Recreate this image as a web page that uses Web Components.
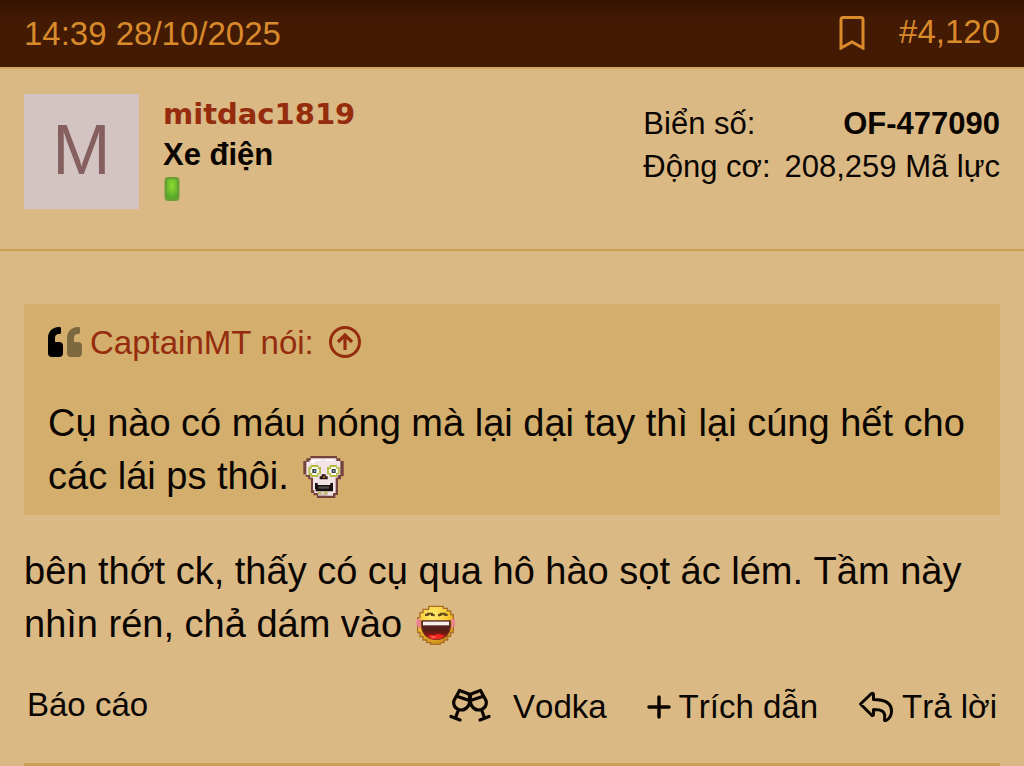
<!DOCTYPE html>
<html lang="vi">
<head>
<meta charset="utf-8">
<meta name="viewport" content="width=device-width, initial-scale=1">
<title>#4,120</title>
<style>
  :root {
    --color-page: #dab985;
    --color-line: #cb9f51;
    --color-link: #942c0d;
    --color-quote: #d3ae6c;
    --color-accent: #d98a2b;
  }
  body {
    margin: 0;
    background: var(--color-page);
    color: #0a0500;
    font-family: "Liberation Sans", Arial, sans-serif;
    font-size: 33px;
    font-kerning: none;
  }
</style>
</head>
<body>
<forum-post>
  <post-header slot="header" time="14:39 28/10/2025" number="#4,120"></post-header>
  <post-user slot="user" name="mitdac1819" rank="Xe điện">
    <user-stat label="Biển số:"><b>OF-477090</b></user-stat>
    <user-stat label="Động cơ:">208,259 Mã lực</user-stat>
  </post-user>
  <post-quote author="CaptainMT">Cụ nào có máu nóng mà lại dại tay thì lại cúng hết cho các lái ps thôi. <post-smilie kind="skull"></post-smilie></post-quote>
  <div>bên thớt ck, thấy có cụ qua hô hào sọt ác lém. Tầm này nhìn rén, chả dám vào <post-smilie kind="laugh"></post-smilie></div>
  <post-actions slot="actions"></post-actions>
</forum-post>

<script>
/**
 * Attach an open shadow root and fill it.
 * @param {HTMLElement} host
 * @param {string} html
 */
function render(host, html) {
  host.attachShadow({ mode: 'open' }).innerHTML = html;
}

/** `<forum-post>` — one post: header, user, body and actions slots. */
class ForumPost extends HTMLElement {
  constructor() {
    super();
    render(this, `
      <style>
        :host { display: block; }
        .body {
          display: flex; flex-direction: column; gap: 30px;
          padding: 53px 24px 0;
          font-size: 38px; line-height: 53px;
        }
        footer { padding: 0 24px; }
        footer::after {
          content: ""; display: block; height: 3px;
          background: var(--color-line);
        }
      </style>
      <article>
        <slot name="header"></slot>
        <slot name="user"></slot>
        <div class="body"><slot></slot></div>
        <footer><slot name="actions"></slot></footer>
      </article>
    `);
  }
}

/**
 * `<post-header>` — dark bar with the time, bookmark and post number.
 * @attr {string} time
 * @attr {string} number
 */
class PostHeader extends HTMLElement {
  connectedCallback() {
    if (this.shadowRoot) return;
    render(this, `
      <style>
        :host {
          display: flex; align-items: center; justify-content: space-between;
          height: 67px; padding: 0 24px;
          background: linear-gradient(#351202, #431a04 20px);
          border-bottom: 2px solid #d0a560;
          color: var(--color-accent);
        }
        a { color: inherit; text-decoration: none; }
        .right { display: flex; align-items: center; gap: 32px; padding-bottom: 4px; }
        svg { display: block; }
      </style>
      <a href="#post">${this.getAttribute('time')}</a>
      <div class="right">
        <a href="#bookmark" aria-label="Bookmark">
          <svg width="28" height="36" viewBox="0 0 28 36" fill="none" stroke="currentColor" stroke-width="3">
            <path d="M2 34V5.500Q2 3.500 4 3.500H22Q24 3.500 24 5.500V34L13 28Z"/>
          </svg>
        </a>
        <a href="#post">${this.getAttribute('number')}</a>
      </div>
    `);
  }
}

/**
 * `<post-user>` — avatar, name and rank; stats go in the default slot.
 * @attr {string} name
 * @attr {string} rank
 */
class PostUser extends HTMLElement {
  connectedCallback() {
    if (this.shadowRoot) return;
    const name = this.getAttribute('name');
    render(this, `
      <style>
        :host {
          display: flex; gap: 24px; padding: 25px 24px 40px;
          border-bottom: 2px solid var(--color-line);
        }
        a { text-decoration: none; }
        .avatar {
          display: flex; align-items: center; justify-content: center;
          box-sizing: border-box;
          width: 115px; height: 115px; padding-bottom: 4px;
          background: #d4c3c3; color: #866060;
          font-size: 70px; line-height: 1;
        }
        .who { flex: 1; display: flex; flex-direction: column; align-items: flex-start; }
        .name {
          color: var(--color-link);
          font: bold 29px/40px "DejaVu Sans", Verdana, sans-serif;
        }
        .rank { font-size: 31px; font-weight: bold; line-height: 42px; }
        .stats { display: flex; flex-direction: column; padding-top: 8px; font-size: 31px; line-height: 43px; }
        svg { display: block; }
      </style>
      <a class="avatar" href="#member">${name[0].toUpperCase()}</a>
      <div class="who">
        <a class="name" href="#member">${name}</a>
        <span class="rank">${this.getAttribute('rank')}</span>
        <svg width="18" height="26" viewBox="0 0 18 26" aria-hidden="true">
          <defs><radialGradient id="pip" cx=".5" cy=".35" r=".6">
            <stop offset="0" stop-color="#8fdc2e"/><stop offset="1" stop-color="#55a62c"/>
          </radialGradient></defs>
          <rect x="2.500" y="2" width="13" height="22" rx="3" fill="url(#pip)" stroke="#6a9e35" stroke-width="2"/>
        </svg>
      </div>
      <div class="stats"><slot></slot></div>
    `);
  }
}

/** `<user-stat>` — label on the left, slotted value on the right. */
class UserStat extends HTMLElement {
  connectedCallback() {
    if (this.shadowRoot) return;
    render(this, `
      <style>
        :host { display: flex; justify-content: space-between; gap: 14px; }
      </style>
      <span>${this.getAttribute('label')}</span>
      <span><slot></slot></span>
    `);
  }
}

/**
 * `<post-quote>` — quoted text with a link to its source.
 * @attr {string} author
 */
class PostQuote extends HTMLElement {
  connectedCallback() {
    if (this.shadowRoot) return;
    render(this, `
      <style>
        :host { display: block; background: var(--color-quote); }
        blockquote { margin: 0; padding: 16px 24px 12px; }
        .title {
          display: flex; align-items: center; gap: 8px;
          margin-bottom: 31px;
          font-size: 33px; line-height: 46px;
        }
        a { display: flex; align-items: center; gap: 14px; color: var(--color-link); text-decoration: none; }
        svg { display: block; }
      </style>
      <blockquote>
        <div class="title">
          <svg width="34" height="32" viewBox="0 0 34 32" aria-hidden="true">
            <path id="q" d="M12 0H11C4 0 0 5 0 11V26Q0 30 4 30H11Q15 30 15 26V19Q15 15 11 15H7V11Q7 7 11 7H12Q13 7 13 5V2Q13 0 12 0Z"/>
            <use href="#q" x="19" opacity=".4"/>
          </svg>
          <a href="#source">${this.getAttribute('author')} nói:
            <svg width="34" height="36" viewBox="0 0 34 36" fill="none" stroke="currentColor" stroke-width="3" aria-hidden="true">
              <circle cx="17" cy="17" r="14.500"/>
              <path d="M17 25V10M10 17L17 10L24 17" stroke-width="3.200"/>
            </svg>
          </a>
        </div>
        <slot></slot>
      </blockquote>
    `);
  }
}

const SMILIES = {
  skull: `
    <svg width="44" height="44" viewBox="35 28 132 132">
      <path d="M60 31H140V38H150V46H160V92H152V101H143V148H135V157H80V149H70V142H62V101H54V93H46V86H39V46H48V38H60Z" fill="#74423c"/>
      <path d="M62 38H138V46H150V88H142V96H136V142H128V150H84V142H72V134H68V96H60V88H48V48H58V42H62Z" fill="#f2e3e7"/>
      <path d="M66 42H92V46H72V52H62V46H66ZM104 41H130V45H104Z" fill="#fff"/>
      <path d="M60 58H84V64H92V86H84V94H62V88H54V64H60ZM118 58H140V64H148V86H140V94H118V86H110V64H118Z" fill="#b6bc46"/>
      <path d="M64 64H82V70H86V82H80V88H66V82H60V70H64ZM122 64H138V70H143V82H137V88H122V82H116V70H122Z" fill="#fffef2"/>
      <path d="M66 70H78V82H66ZM124 70H136V82H124Z" fill="#343c42"/>
      <path d="M71 74H75V78H71ZM128 74H132V78H128Z" fill="#9fd5e5"/>
      <path d="M94 86H106V92H112V101H88V92H94Z" fill="#2c1713"/>
      <path d="M98 92H104V97H98Z" fill="#a47c31"/>
      <path d="M74 112H82V118H120V112H128V137H76V130H74Z" fill="#18100f"/>
      <path d="M84 122H116V129H84Z" fill="#4c4a4a"/>
      <path d="M82 138H94V145H82ZM100 138H112V145H100Z" fill="#c1b95e"/>
      <path d="M84 146H112V151H84Z" fill="#c1a3a4"/>
    </svg>`,
  laugh: `
    <svg width="40" height="40" viewBox="22 27 120 120">
      <defs>
        <radialGradient id="face" cx=".42" cy=".25" r=".8">
          <stop offset="0" stop-color="#ffed72"/><stop offset=".55" stop-color="#f7c82f"/><stop offset="1" stop-color="#c88317"/>
        </radialGradient>
        <linearGradient id="mouth" x2="0" y2="1">
          <stop offset="0" stop-color="#4a302c"/><stop offset=".55" stop-color="#5a1a14"/><stop offset="1" stop-color="#ce1711"/>
        </linearGradient>
      </defs>
      <path d="M60 31H104V37H116V45H126V56H134V110H126V121H117V132H106V140H95V145H66V140H54V132H43V122H34V110H27V65H34V50H43V40H60Z" fill="url(#face)" stroke="#a96f28" stroke-width="4"/>
      <path d="M25 69H36V96H28V88H23V76H25ZM129 69H139V89H134V97H128Z" fill="#ee8395"/>
      <path d="M52 60V56H58V53H70V57H75V61M91 61V57H96V53H108V56H114V60" fill="none" stroke="#5e481c" stroke-width="6"/>
      <path d="M38 74H126V91Q124 109 114 120Q101 131 82 131Q62 131 50 119Q39 108 38 91Z" fill="url(#mouth)" stroke="#793a1c" stroke-width="3"/>
      <path d="M43 77H121V88H43Z" fill="#f7eeee"/>
      <path d="M58 122Q65 113 75 119Q87 108 107 120Q97 130 81 130Q66 130 58 122Z" fill="#f32721"/>
      <path d="M68 121H80V125H68Z" fill="#ff7b6e"/>
    </svg>`
};

/**
 * `<post-smilie>` — inline emoticon.
 * @attr {string} kind - Key of `SMILIES`.
 */
class PostSmilie extends HTMLElement {
  connectedCallback() {
    if (this.shadowRoot) return;
    render(this, `
      <style>
        :host { display: inline-block; vertical-align: middle; line-height: 0; margin-left: 3px; padding-bottom: 4px; }
      </style>
      ${SMILIES[this.getAttribute('kind')]}
    `);
  }
}

/** `<post-actions>` — report on the left, react / quote / reply on the right. */
class PostActions extends HTMLElement {
  constructor() {
    super();
    render(this, `
      <style>
        :host {
          display: flex; align-items: center; justify-content: space-between;
          padding: 29px 3px 33px; line-height: 46px;
        }
        .right { display: flex; gap: 40px; padding-top: 4px; }
        a { display: flex; align-items: center; gap: 8px; color: inherit; text-decoration: none; }
        .react { gap: 22px; }
        svg { display: block; fill: none; stroke: currentColor; }
      </style>
      <a href="#report">Báo cáo</a>
      <div class="right">
        <a class="react" href="#react">
          <svg width="42" height="38" viewBox="0 0 42 38" stroke-width="3.200" stroke-linecap="round" stroke-linejoin="round" aria-hidden="true">
            <path id="glass" d="M10.500 2.500L20 6Q22 13 19.500 17.500Q15.500 23.500 9.500 21.500Q3.500 18.500 5 12.500ZM8.500 8.500L20.500 12.500M9.500 21.500L6.500 30M2 28.500L11 32"/>
            <use href="#glass" transform="matrix(-1 0 0 1 42 0)"/>
          </svg>
          Vodka
        </a>
        <a href="#quote">
          <svg width="24" height="24" viewBox="0 0 24 24" stroke-width="3.500" stroke-linecap="round" aria-hidden="true"><path d="M12 2V22M2 12H22"/></svg>
          Trích dẫn
        </a>
        <a href="#reply">
          <svg width="36" height="32" viewBox="0 0 36 32" stroke-width="3" stroke-linejoin="round" aria-hidden="true">
            <path d="M2.500 13L13.500 2.500Q15.500 1.500 15.500 4V8.500C27 8.500 34 12 33.500 21Q33 27 28 29.500Q26 30 26.500 28C28 20 23 18.500 15.500 18.500V23Q15.500 25.500 13.500 24Z"/>
          </svg>
          Trả lời
        </a>
      </div>
    `);
  }
}

customElements.define('forum-post', ForumPost);
customElements.define('post-header', PostHeader);
customElements.define('post-user', PostUser);
customElements.define('user-stat', UserStat);
customElements.define('post-quote', PostQuote);
customElements.define('post-smilie', PostSmilie);
customElements.define('post-actions', PostActions);
</script>
</body>
</html>
